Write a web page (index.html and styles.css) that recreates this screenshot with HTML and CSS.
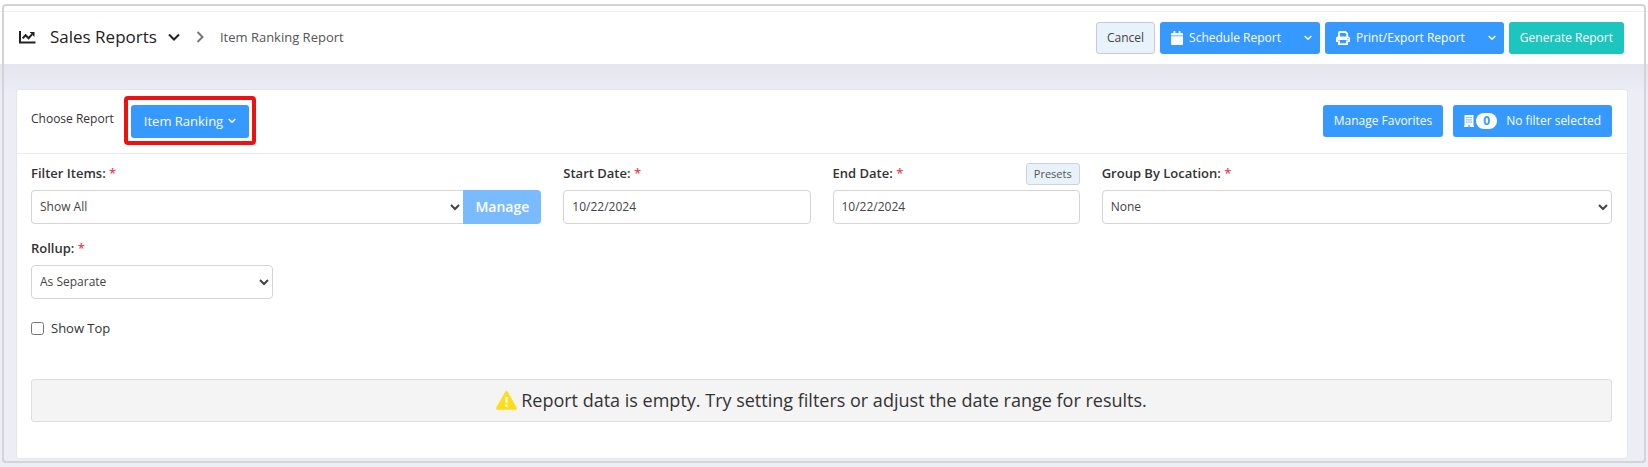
FILE: index.html
```html
<!DOCTYPE html>
<html lang="en">
<head>
<meta charset="utf-8">
<meta name="viewport" content="width=device-width, initial-scale=1">
<title>Item Ranking Report</title>
<link rel="stylesheet" href="styles.css">
</head>
<body>
<header class="topbar">
  <nav class="crumbs">
    <svg class="icon-chart" width="17" height="13" viewBox="0 0 17 13"><path d="M1 0v11.600h15.500" fill="none" stroke="#222" stroke-width="2"/><path d="M3.600 7.400L6.600 4.200L9.600 7.200L13 3.400" fill="none" stroke="#222" stroke-width="2"/><path d="M10.600 1h4.900v4.900z" fill="#222"/></svg>
    <button class="section-menu" type="button">Sales Reports
      <svg width="12" height="8" viewBox="0 0 12 8"><path d="M1 1.500l5 5l5-5" fill="none" stroke="#222" stroke-width="2"/></svg>
    </button>
    <svg class="separator" width="8" height="12" viewBox="0 0 8 12"><path d="M1.500 1l5 5l-5 5" fill="none" stroke="#777" stroke-width="2"/></svg>
    <span class="current">Item Ranking Report</span>
  </nav>
  <div class="actions">
    <button class="btn btn-light" type="button">Cancel</button>
    <div class="split">
      <button class="btn btn-main" type="button"><svg width="12" height="14" viewBox="0 0 12 14"><path d="M2.500 0h1.800v2h3.400V0h1.800v2H11a1 1 0 0 1 1 1v1.400H0V3a1 1 0 0 1 1-1h1.500zM0 5.200h12V13a1 1 0 0 1-1 1H1a1 1 0 0 1-1-1z" fill="#fff"/></svg>Schedule Report</button>
      <button class="btn btn-toggle" type="button" aria-label="Schedule options"><svg width="8" height="6" viewBox="0 0 8 6"><path d="M.7 1L4 4.300L7.300 1" fill="none" stroke="#fff" stroke-width="1.500"/></svg></button>
    </div>
    <div class="split">
      <button class="btn btn-main" type="button"><svg width="14" height="14" viewBox="0 0 14 14"><path d="M3 6V1.800Q3 1 3.800 1H9.500L11.200 2.700V6" fill="none" stroke="#fff" stroke-width="1.800"/><path d="M2 5.500h10a2 2 0 0 1 2 2V11h-2.200V9H2.200v2H0V7.500a2 2 0 0 1 2-2z" fill="#fff"/><path d="M3 9.500v3.600h8V9.500" fill="none" stroke="#fff" stroke-width="1.800"/><circle cx="11.800" cy="7.600" r=".7" fill="#3699ff"/></svg>Print/Export Report</button>
      <button class="btn btn-toggle" type="button" aria-label="Export options"><svg width="8" height="6" viewBox="0 0 8 6"><path d="M.7 1L4 4.300L7.300 1" fill="none" stroke="#fff" stroke-width="1.500"/></svg></button>
    </div>
    <button class="btn btn-green" type="button">Generate Report</button>
  </div>
</header>

<main class="page">
  <section class="card">
    <div class="card-head">
      <div class="chooser">
        <span class="chooser-label">Choose Report</span>
        <div class="highlight">
          <button class="btn btn-report" type="button">Item Ranking<svg width="8" height="6" viewBox="0 0 8 6"><path d="M.7 1L4 4.300L7.300 1" fill="none" stroke="#fff" stroke-width="1.400"/></svg></button>
        </div>
      </div>
      <div class="card-actions">
        <button class="btn" type="button">Manage Favorites</button>
        <button class="btn btn-filter" type="button"><svg width="10" height="12" viewBox="0 0 10 12"><path d="M.5 0h9v10.800h.5V12H5.600V9.800H4.400V12H0v-1.200h.5z" fill="#fff"/><path d="M2.400 2h1.100v1.100H2.400zM4.450 2h1.100v1.100H4.450zM6.500 2h1.100v1.100H6.500zM2.400 4.300h1.100v1.100H2.400zM4.450 4.300h1.100v1.100H4.450zM6.500 4.300h1.100v1.100H6.500zM2.400 6.600h1.100v1.100H2.400zM4.450 6.600h1.100v1.100H4.450zM6.500 6.600h1.100v1.100H6.500z" fill="#3699ff"/></svg><span class="count">0</span>No filter selected</button>
      </div>
    </div>

    <form class="filters">
      <div class="field">
        <label for="items">Filter Items: <span class="req">*</span></label>
        <div class="group">
          <select id="items" class="control"><option>Show All</option></select>
          <button class="manage" type="button" disabled>Manage</button>
        </div>
      </div>
      <div class="field">
        <label for="start">Start Date: <span class="req">*</span></label>
        <input id="start" class="control" type="text" value="10/22/2024">
      </div>
      <div class="field">
        <div class="label-row">
          <label for="end">End Date: <span class="req">*</span></label>
          <button class="presets" type="button">Presets</button>
        </div>
        <input id="end" class="control" type="text" value="10/22/2024">
      </div>
      <div class="field">
        <label for="location">Group By Location: <span class="req">*</span></label>
        <select id="location" class="control"><option>None</option></select>
      </div>
      <div class="field">
        <label for="rollup">Rollup: <span class="req">*</span></label>
        <select id="rollup" class="control control-short"><option>As Separate</option></select>
      </div>
    </form>

    <label class="check"><input type="checkbox">Show Top</label>

    <div class="notice" role="status">
      <svg width="21" height="19" viewBox="0 0 21 19"><path d="M9.200.8q1.300-1.500 2.600 0L20.700 16.500q.7 2-1.400 2.200H1.700Q-.4 18.500.3 16.500z" fill="#fddc1c"/><path d="M9.300 6h2.400l-.3 6H9.600zM9.400 13.500h2.200v2.200H9.400z" fill="#fff"/></svg>
      <span>Report data is empty. Try setting filters or adjust the date range for results.</span>
    </div>
  </section>
</main>
</body>
</html>
```
FILE: styles.css
```css
* { box-sizing: border-box; }

body {
  margin: 0;
  min-height: 100vh;
  background: #eceef6;
  color: #333;
  font: 13px/20px "Open Sans", "Noto Sans", sans-serif;
}

/* Thin rounded outline drawn over the page edges */
body::after {
  content: "";
  position: absolute;
  inset: 4px 2px 4px 2px;
  border: 2px solid #d3d3d8;
  border-radius: 4px;
  pointer-events: none;
}

button, input, select { font: inherit; color: inherit; }

.topbar {
  display: flex;
  align-items: center;
  justify-content: space-between;
  padding: 22px 24px 10px 19px;
  background: linear-gradient(#eee, #eee) 0 11px / 100% 1px no-repeat #fff;
}

.crumbs { display: flex; align-items: center; padding-bottom: 2px; }

.section-menu {
  display: flex;
  align-items: center;
  gap: 11px;
  margin: 0 16px 0 14px;
  padding: 0;
  border: 0;
  background: none;
  color: #222;
  font-size: 17px;
}

.current { margin-left: 16px; color: #555; }

.actions, .card-actions { display: flex; gap: 5px; }
.card-actions { gap: 10px; }
.split { display: flex; }

.btn {
  display: flex;
  align-items: center;
  height: 32px;
  padding: 0 11px;
  border: 0;
  border-radius: 3px;
  background: #3699ff;
  color: #fff;
  font-size: 12px;
  white-space: nowrap;
}

.btn-light { padding: 0 10px; border: 1px solid #c4ccd4; background: #e8f2fb; color: #444; }
.btn-green { background: #1cc5bd; }
.btn-main { gap: 6px; padding-right: 15px; border-radius: 3px 0 0 3px; }
.btn-toggle { padding: 0 8px; border-radius: 0 3px 3px 0; }
.btn-report { gap: 5px; height: 33px; padding: 0 13px 2px; font-size: 13px; }

.page {
  padding: 25px 20px 9px 16px;
  background: linear-gradient(#e4e5ef, #eceef6 30px);
}

.card {
  padding-bottom: 36px;
  border: 1px solid #e3e6ee;
  border-radius: 3px;
  background: #fff;
}

.card-head {
  display: flex;
  align-items: flex-start;
  justify-content: space-between;
  padding: 6px 15px 8px 14px;
  border-bottom: 1px solid #e8eaee;
}

.chooser { display: flex; align-items: flex-start; gap: 10px; }
.chooser-label { padding-top: 13px; font-size: 12px; }
.highlight { padding: 5px 3px 3px; border: 4px solid #ee1111; border-radius: 4px; }
.card-actions { padding-top: 9px; }

.count {
  margin: 0 9px 0 2px;
  padding: 0 7px;
  border-radius: 8px;
  background: #fff;
  color: #3699ff;
  font-weight: 700;
  line-height: 16px;
}

.filters {
  display: grid;
  grid-template-columns: 510fr 247fr 247fr 510fr;
  gap: 13px 22px;
  padding: 8px 15px 0 14px;
}

.field { display: flex; flex-direction: column; min-width: 0; }
.field label { padding: 1px 0 7px; font-weight: 600; }
.req { color: #e04a59; }
.label-row { display: flex; align-items: flex-start; justify-content: space-between; }

.presets {
  height: 22px;
  margin-top: 1px;
  padding: 0 7px;
  border: 1px solid #ccd4db;
  border-radius: 3px;
  background: #e8f2fb;
  color: #555;
  font-size: 11px;
  line-height: 20px;
}

.control {
  width: 100%;
  height: 34px;
  padding: 0 8px 2px;
  border: 1px solid #d4d4d4;
  border-radius: 4px;
  background: #fff;
  color: #444;
  font-size: 12px;
}

select.control { padding: 0 0 2px 4px; }
.control-short { max-width: 242px; }

.group { display: flex; }
.group .control { flex: 1; min-width: 0; border-right: 0; border-radius: 4px 0 0 4px; }

.manage {
  padding: 0 12px;
  border: 0;
  border-radius: 0 4px 4px 0;
  background: #7abaff;
  color: #fff;
  font-size: 14px;
  font-weight: 600;
}

.check {
  display: inline-flex;
  align-items: center;
  gap: 7px;
  margin: 19px 14px 0;
}
.check input { width: 13px; height: 13px; margin: 0; }

.notice {
  display: flex;
  align-items: center;
  justify-content: center;
  gap: 4px;
  margin: 39px 15px 0 14px;
  padding: 7px;
  border: 1px solid #dedede;
  border-radius: 3px;
  background: #f4f4f4;
  font-size: 18px;
  line-height: 27px;
}
```
